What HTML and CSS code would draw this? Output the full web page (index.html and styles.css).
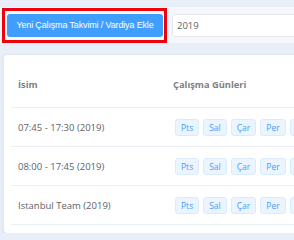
FILE: index.html
```html
<!DOCTYPE html>
<html lang="tr">
<head>
<meta charset="utf-8">
<title>Çalışma Takvimi</title>
<link rel="stylesheet" href="styles.css">
</head>
<body>
<div class="page">
  <div class="toolbar">
    <div class="highlight">
      <button class="btn-primary" type="button">Yeni Çalışma Takvimi / Vardiya Ekle</button>
    </div>
    <div class="year-input">2019</div>
  </div>
  <div class="card">
    <div class="row head">
      <div class="cell name">İsim</div>
      <div class="cell days">Çalışma Günleri</div>
    </div>
    <div class="row">
      <div class="cell name">07:45 - 17:30 (2019)</div>
      <div class="cell days"><span class="tag">Pts</span><span class="tag">Sal</span><span class="tag">Çar</span><span class="tag">Per</span><span class="tag">Cum</span></div>
    </div>
    <div class="row">
      <div class="cell name">08:00 - 17:45 (2019)</div>
      <div class="cell days"><span class="tag">Pts</span><span class="tag">Sal</span><span class="tag">Çar</span><span class="tag">Per</span><span class="tag">Cum</span></div>
    </div>
    <div class="row">
      <div class="cell name">Istanbul Team (2019)</div>
      <div class="cell days"><span class="tag">Pts</span><span class="tag">Sal</span><span class="tag">Çar</span><span class="tag">Per</span><span class="tag">Cum</span></div>
    </div>
  </div>
</div>
</body>
</html>
```
FILE: styles.css
```css
html, body {
  margin: 0;
  padding: 0;
  background: #e9eff8;
  overflow: hidden;
  font-family: "Open Sans", "DejaVu Sans", sans-serif;
}
.page {
  width: 420px;
  padding-top: 7px;
}
.toolbar {
  display: flex;
  align-items: center;
  height: 36px;
  background: #f5f7fa;
  padding-left: 2px;
}
.highlight {
  border: 3px solid #f0000c;
  padding: 3px 1px 3px 2px;
  background: #fff;
  display: flex;
}
.btn-primary {
  width: 156px;
  height: 23px;
  border: none;
  border-radius: 3px;
  background: #409eff;
  color: #fff;
  font-family: "Liberation Sans", Arial, sans-serif;
  font-size: 9px;
  letter-spacing: -0.15px;
  white-space: nowrap;
  padding: 0;
  margin: 0;
}
.year-input {
  margin-left: 5px;
  height: 21px;
  width: 200px;
  border: 1px solid #e4e7ed;
  border-radius: 3px;
  background: #fff;
  color: #606266;
  font-size: 9.5px;
  line-height: 21px;
  padding-left: 4px;
}
.card {
  margin: 12px 0 0 4px;
  background: #fff;
  border-radius: 4px;
  box-shadow: 0 1px 4px rgba(120, 140, 170, 0.18);
  padding: 11px 0 8px 7px;
}
.row {
  display: flex;
  align-items: center;
  height: 38px;
  border-bottom: 1px solid #ebeef5;
}
.row.head {
  align-items: flex-start;
  height: 41px;
}
.row.head .cell {
  font-weight: 700;
  color: #7c7f86;
  font-size: 9.3px;
  line-height: 38px;
}
.cell {
  font-size: 9.5px;
  color: #606266;
}
.cell.name {
  width: 155px;
  padding-left: 7px;
  flex: none;
}
.cell.days {
  display: flex;
  gap: 4px;
  white-space: nowrap;
}
.row:not(.head) .cell.days {
  padding-left: 2px;
}
.tag {
  display: inline-block;
  height: 15px;
  line-height: 15px;
  padding: 0 5px;
  border: 1px solid #d9ecff;
  background: #ecf5ff;
  color: #409eff;
  border-radius: 3px;
  font-size: 8.5px;
}
```
